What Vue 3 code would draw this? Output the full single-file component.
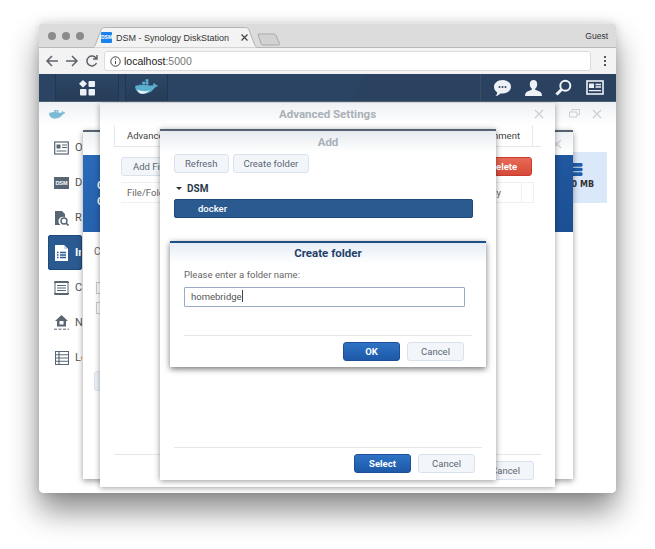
<script setup>
const menu = [
  { label: 'Overview', icon: 'card' },
  { label: 'Docker', icon: 'dsm' },
  { label: 'Registry', icon: 'reg' },
  { label: 'Image', icon: 'img', active: true },
  { label: 'Container', icon: 'cont' },
  { label: 'Network', icon: 'net' },
  { label: 'Log', icon: 'log' },
]
</script>

<template>
  <div class="page">
  <div class="browser">
    <div class="titlebar">
      <div class="lights"><i></i><i></i><i></i></div>
      <div class="tab">
        <svg class="tab-shape" width="172" height="21" viewBox="0 0 172 21"><path d="M0 21c4 0 5-2 6-5L11 3c.5-1.500 1.500-2.500 3.500-2.500h141c2 0 3 1 3.500 2.500l5 13c1 3 2 5 6 5z" fill="#f3f3f3" stroke="#b4b4b4"/></svg>
        <span class="favicon">DSM</span>
        <span class="tab-title">DSM - Synology DiskStation</span>
        <svg class="tab-x" width="9" height="9" viewBox="0 0 9 9"><path d="M1.500 1.500l6 6M7.500 1.500l-6 6" stroke="#444" stroke-width="1.200"/></svg>
      </div>
      <svg class="newtab" width="24" height="13" viewBox="0 0 24 13"><path d="M1 1h16c1 0 1.500.5 2 1.500l3.500 8c.4 1-.2 1.500-1 1.500H6c-1 0-1.500-.5-2-1.500L1 1z" fill="#d2d2d2" stroke="#a9a9a9"/></svg>
      <span class="guest">Guest</span>
    </div>

    <div class="toolbar">
      <svg class="nav" width="14" height="14" viewBox="0 0 14 14"><path d="M13 7H2M7 2L2 7l5 5" fill="none" stroke="#5f6368" stroke-width="1.500"/></svg>
      <svg class="nav" width="14" height="14" viewBox="0 0 14 14"><path d="M1 7h11M7 2l5 5-5 5" fill="none" stroke="#5f6368" stroke-width="1.500"/></svg>
      <svg class="nav" width="14" height="14" viewBox="0 0 14 14"><path d="M11.500 9A5 5 0 1 1 11.300 4.500M12 1v4H8" fill="none" stroke="#5f6368" stroke-width="1.500"/></svg>
      <div class="omnibox">
        <svg width="11" height="11" viewBox="0 0 11 11"><circle cx="5.500" cy="5.500" r="4.700" fill="none" stroke="#444"/><path d="M5.500 5v3M5.500 2.500v1.200" stroke="#444"/></svg>
        <span class="host">localhost<span class="port">:5000</span></span>
      </div>
      <div class="kebab"><i></i><i></i><i></i></div>
    </div>

    <div class="dsmbar">
      <div class="launcher main">
        <svg width="17" height="16" viewBox="0 0 17 16" fill="#eef2f6"><path d="M4 0l4 3.700L4 7.500 0 3.700z"/><rect x="9.500" y="1" width="6.500" height="6" rx="1"/><rect x="1" y="9" width="6.500" height="6.500" rx="1"/><rect x="9.500" y="9" width="6.500" height="6.500" rx="1"/></svg>
      </div>
      <div class="launcher dock">
        <svg width="24" height="18" viewBox="0 0 25 16"><path d="M.8 7.800h17.600c1.200 0 2-.4 2.600-1 .9 0 1.700-.4 2.300-1.200-.6-.5-1.500-.6-2.200-.4-.1-.9-.6-1.600-1.300-2-.6.700-.7 1.500-.3 2.300-.4.3-1 .4-1.600.4H.8c-.3 4 2 7.600 7.500 7.600 6 0 10-2.400 12-6.500" fill="#5cb0cf" stroke="#5cb0cf"/><path d="M2.500 9.500c3 2 9 2.500 13 .5-3 3-6 4.200-9 4-2.500-.5-3.500-2.500-4-4.500z" fill="#fff" opacity=".85"/><path d="M4 4.500h3v2.500H4zM7.500 4.500h3v2.500h-3zM11 4.500h3v2.500h-3zM7.500 1.500h3V4h-3zM11 1.500h3V4h-3zM11-1h3v2.200h-3z" fill="#5cb0cf"/></svg>
      </div>
      <div class="tray">
        <svg width="17" height="16" viewBox="0 0 17 16"><path d="M8.500 0C13 0 17 2.800 17 6.800s-4 6.800-8.500 6.800c-.8 0-1.500-.1-2.200-.2C5 14.800 3.500 15.600 1.500 16c1-1 1.600-2.300 1.700-3.600C1.200 11.200 0 9.200 0 6.800 0 2.800 4 0 8.500 0z" fill="#eef2f6"/><circle cx="5.500" cy="7" r="1" fill="#2a4260"/><circle cx="8.500" cy="7" r="1" fill="#2a4260"/><circle cx="11.500" cy="7" r="1" fill="#2a4260"/></svg>
        <svg width="17" height="16" viewBox="0 0 17 16" fill="#eef2f6"><path d="M8.500 0c2.500 0 3.700 1.800 3.700 4.200 0 2-1 3.600-2 4.400v1.200c2.500.8 5.800 2 6.300 3.400.2.600.5 2.800.5 2.800H0s.3-2.200.5-2.800c.5-1.400 3.800-2.600 6.300-3.400V8.600c-1-.8-2-2.400-2-4.400C4.800 1.800 6 0 8.500 0z"/></svg>
        <svg width="17" height="17" viewBox="0 0 17 17"><circle cx="10.300" cy="6.700" r="5" fill="none" stroke="#eef2f6" stroke-width="2"/><path d="M6.500 10.500L1.500 15.500" stroke="#eef2f6" stroke-width="3"/></svg>
        <svg width="18" height="15" viewBox="0 0 18 15"><rect x="1" y="1" width="16" height="13" fill="#2a4260" stroke="#eef2f6" stroke-width="1.600"/><rect x="3" y="3.500" width="5" height="4.500" fill="#eef2f6"/><path d="M9.500 4.500H15M9.500 7H15M3 10.700h12" stroke="#eef2f6" stroke-width="1.300"/></svg>
      </div>
    </div>

    <div class="desktop">
      <section class="win app">
        <header class="app-head">
          <svg width="17" height="11" viewBox="0 0 25 16"><path d="M.8 7.800h17.600c1.200 0 2-.4 2.600-1 .9 0 1.700-.4 2.300-1.200-.6-.5-1.500-.6-2.200-.4-.1-.9-.6-1.600-1.300-2-.6.700-.7 1.500-.3 2.300-.4.3-1 .4-1.600.4H.8c-.3 4 2 7.600 7.500 7.600 6 0 10-2.400 12-6.500" fill="#7cbad6" stroke="#7cbad6"/><path d="M4 4.500h3v2.500H4zM7.500 4.500h3v2.500h-3zM11 4.500h3v2.500h-3zM7.500 1.500h3V4h-3zM11 1.500h3V4h-3z" fill="#7cbad6"/></svg>
          <div class="app-ctl">
            <svg width="11" height="10" viewBox="0 0 11 10"><path d="M3 2.500V.5h7.500v5H8M.5 3h7.500v5H.5z" fill="none" stroke="#c9ced4"/></svg>
            <svg class="x" width="10" height="10" viewBox="0 0 10 10"><path d="M1 1l8 8M9 1L1 9" stroke="#c9ced4" stroke-width="1.100"/></svg>
          </div>
        </header>
        <div class="app-body">
          <nav class="side">
            <div v-for="m in menu" :key="m.label" class="side-row" :class="{ on: m.active }">
              <span class="side-ic">
                <svg v-if="m.icon === 'card'" width="15" height="14" viewBox="0 0 15 14"><rect x=".7" y="1" width="13.600" height="12" fill="#fff" stroke="#586674" stroke-width="1.200"/><rect x="2.500" y="3.500" width="4" height="4" fill="#586674"/><path d="M8 4h5M8 6.500h5M2.500 10h10" stroke="#586674"/></svg>
                <span v-else-if="m.icon === 'dsm'" class="dsm-ic">DSM</span>
                <svg v-else-if="m.icon === 'reg'" width="15" height="16" viewBox="0 0 15 16"><path d="M1 1h7l3 3v3.500A4.200 4.200 0 0 0 6.500 15H1z" fill="#586674"/><circle cx="10" cy="11" r="3" fill="#fff" stroke="#586674" stroke-width="1.400"/><path d="M12 13.200l2.500 2.300" stroke="#586674" stroke-width="1.600"/></svg>
                <svg v-else-if="m.icon === 'img'" width="15" height="16" viewBox="0 0 15 16"><path d="M1 0h9l4 4v12H1z" fill="#fff"/><path d="M10 0v4h4" fill="#cbd8e8"/><path d="M3 7.500h1.500M6 7.500h6M3 10h1.500M6 10h6M3 12.500h1.500M6 12.500h6" stroke="#2a5a8f" stroke-width="1.300"/></svg>
                <svg v-else-if="m.icon === 'cont'" width="15" height="14" viewBox="0 0 15 14"><rect x="1" y=".5" width="13" height="13" fill="#fff" stroke="#586674"/><path d="M0 1.500h15M0 12.500h15M3 4.500h9M3 7h9M3 9.500h9" stroke="#586674" stroke-width="1.200"/></svg>
                <svg v-else-if="m.icon === 'net'" width="15" height="15" viewBox="0 0 15 15"><path d="M7.500 0L14 6h-2v5.500H3V6H1z" fill="#586674"/><rect x="5.500" y="6" width="4" height="3.500" fill="#fff"/><path d="M0 14.200h15" stroke="#586674" stroke-dasharray="3 1.500"/></svg>
                <svg v-else width="14" height="14" viewBox="0 0 14 14"><rect x=".5" y=".5" width="13" height="13" fill="#fff" stroke="#586674"/><path d="M.5 3.700h13M.5 7h13M.5 10.300h13M4 .5v13" stroke="#586674" stroke-width="1.100"/></svg>
              </span>
              <span class="side-label">{{ m.label }}</span>
            </div>
          </nav>
          <div class="app-main">
            <div class="stat">
              <svg width="12" height="13" viewBox="0 0 12 14" fill="#1f5ea8"><rect y="0" width="12" height="4" rx="1.500"/><rect y="5" width="12" height="4" rx="1.500"/><rect y="10" width="12" height="4" rx="1.500"/></svg>
              <b>50 MB</b>
            </div>
          </div>
        </div>
      </section>

      <section class="win mid">
        <header class="mid-head">
          <svg width="10" height="10" viewBox="0 0 10 10"><path d="M1 1l8 8M9 1L1 9" stroke="#c9ced4" stroke-width="1.100"/></svg>
        </header>
        <div class="mid-band">
          <span class="sliver">Container</span>
          <span class="sliver">Create</span>
        </div>
        <div class="mid-body">
          <p class="mid-label">Command</p>
          <div class="mid-check"></div>
          <div class="mid-check"></div>
          <div class="mid-btn"></div>
        </div>
      </section>

      <section class="win adv">
        <header class="head"><span class="title">Advanced Settings</span>
          <svg class="adv-x" width="10" height="10" viewBox="0 0 10 10"><path d="M1 1l8 8M9 1L1 9" stroke="#c9ced4" stroke-width="1.100"/></svg>
        </header>
        <div class="tabs">
          <span class="tab-item">Advanced Settings</span>
          <span class="tab-spacer"></span>
          <span class="tab-item end">Environment</span>
        </div>
        <div class="adv-tools">
          <button class="btn">Add File</button>
          <span class="grow"></span>
          <button class="btn red">Delete</button>
        </div>
        <div class="adv-table">
          <span class="th">File/Folder</span>
          <span class="grow"></span>
          <span class="th ro">Read-Only</span>
          <span class="th narrow"></span>
        </div>
        <div class="grow"></div>
        <footer class="adv-foot">
          <button class="btn primary"></button>
          <button class="btn">Cancel</button>
        </footer>
      </section>

      <section class="win add">
        <header class="head add-head"><span class="title">Add</span></header>
        <div class="add-tools">
          <button class="btn">Refresh</button>
          <button class="btn">Create folder</button>
        </div>
        <div class="tree-root"><i class="caret"></i><b>DSM</b></div>
        <div class="tree-sel">docker</div>
        <div class="grow"></div>
        <footer class="add-foot">
          <button class="btn primary">Select</button>
          <button class="btn">Cancel</button>
        </footer>
      </section>

      <section class="win create">
        <header class="create-head">Create folder</header>
        <label class="create-label">Please enter a folder name:</label>
        <div class="field">homebridge<i class="cursor"></i></div>
        <div class="grow"></div>
        <footer class="create-foot">
          <button class="btn primary">OK</button>
          <button class="btn">Cancel</button>
        </footer>
      </section>
    </div>
  </div>
  </div>
</template>

<style scoped>
.page {
  width: 655px;
  height: 549px;
  box-sizing: border-box;
  padding: 23px 0 0 39px;
  overflow: hidden;
  background: #fff;
}
.browser {
  position: relative;
  width: 577px;
  height: 470px;
  display: flex;
  flex-direction: column;
  background: #fff;
  border-radius: 4px 4px 5px 5px;
  box-shadow: 0 18px 30px rgba(0, 0, 0, .45), 0 0 10px rgba(0, 0, 0, .14);
  font-family: Roboto, sans-serif;
  font-size: 9.500px;
}
.titlebar {
  position: relative;
  height: 25px;
  flex: none;
  background: #dcdcdc;
  display: flex;
  align-items: center;
  padding-left: 9px;
  box-sizing: border-box;
  border-top: 1px solid #e6e6e6;
  border-bottom: 1px solid #b8b8b8;
  border-radius: 4px 4px 0 0;
}
.lights { display: flex; gap: 6px; }
.lights i { width: 8px; height: 8px; border-radius: 50%; background: #8b8b8b; }
.tab {
  position: absolute;
  left: 51px;
  top: 3px;
  width: 172px;
  height: 21px;
  display: flex;
  align-items: center;
  font-family: "Liberation Sans", sans-serif;
}
.tab-shape { position: absolute; left: 0; top: 0; }
.favicon {
  position: relative;
  margin-left: 11px;
  width: 11px;
  height: 11px;
  background: #1a82e8;
  color: #fff;
  font: bold 5px/11px "Liberation Sans", sans-serif;
  text-align: center;
  border-radius: 1px;
}
.tab-title { position: relative; margin-left: 4px; font-size: 9px; color: #333; white-space: nowrap; }
.tab-x { position: absolute; left: 150px; top: 6px; }
.newtab { position: absolute; left: 218px; top: 9px; }
.guest { position: absolute; right: 8px; top: 7px; font: 8.500px "Liberation Sans", sans-serif; color: #333; }
.toolbar {
  height: 26px;
  flex: none;
  background: #f3f3f3;
  display: flex;
  align-items: center;
  padding-left: 6px;
  gap: 6px;
  box-sizing: border-box;
}
.nav { flex: none; }
.omnibox {
  margin-left: -1px;
  width: 487px;
  height: 20px;
  box-sizing: border-box;
  background: #fff;
  border: 1px solid #dcdcdc;
  border-radius: 3px;
  display: flex;
  align-items: center;
  padding-left: 5px;
  gap: 3px;
}
.host { font: 10.500px "Liberation Sans", sans-serif; color: #222; }
.port { color: #777; }
.kebab { margin-left: 7px; display: flex; flex-direction: column; gap: 2px; }
.kebab i { width: 2px; height: 2px; background: #555; }
.dsmbar {
  height: 28px;
  flex: none;
  box-sizing: border-box;
  background: linear-gradient(122deg, #2b4464 0 55%, #2a4260 55.100%);
  border-bottom: 1px solid #4f5f73;
  display: flex;
  align-items: stretch;
  padding-left: 16px;
}
.launcher {
  display: flex;
  align-items: center;
  justify-content: center;
  border-left: 1px solid #22364f;
  border-right: 1px solid #22364f;
  background: linear-gradient(#2d4767, #263c58);
}
.main { width: 62px; }
.dock { width: 41px; margin-left: 6px; }
.tray {
  margin-left: auto;
  width: 136px;
  padding-right: 12px;
  box-sizing: border-box;
  display: flex;
  align-items: center;
  justify-content: space-between;
  border-left: 1px solid #384e6b;
  padding-left: 13px;
}
.desktop { position: relative; flex: 1; overflow: hidden; background: #fff; border-radius: 0 0 5px 5px; }
.win { position: absolute; background: #fff; display: flex; flex-direction: column; box-sizing: border-box; }
.grow { flex: 1; }

.app { left: 0; top: 0; width: 100%; height: 100%; }
.app-head {
  height: 24px;
  flex: none;
  display: flex;
  align-items: center;
  padding-left: 10px;
  background: linear-gradient(#eef1f4, #fff);
}
.app-ctl { margin-left: auto; display: flex; align-items: center; gap: 12px; padding-right: 14px; }
.app-body { flex: 1; display: flex; }
.side { width: 190px; flex: none; padding: 4px 0 0 9px; box-sizing: border-box; }
.side-row { width: 34px; height: 35px; overflow: hidden; display: flex; align-items: center; padding-left: 6px; gap: 6px; box-sizing: border-box; border-radius: 2px; }
.side-row.on { background: #2a5a8f; border: 1px solid #1f4a7c; padding-left: 5px; }
.side-row.on .side-label { color: #fff; font-weight: bold; }
.side-ic { width: 15px; flex: none; display: flex; justify-content: center; align-items: center; }
.side-label { font-size: 11px; color: #555; white-space: nowrap; }
.dsm-ic { width: 15px; height: 12px; background: #586674; color: #fff; font: bold 5.500px/12px "Liberation Sans", sans-serif; text-align: center; }
.app-main { flex: 1; display: flex; justify-content: flex-end; padding: 26px 9px 0 0; align-items: flex-start; }
.stat {
  width: 50px;
  height: 51px;
  background: #dbe8f9;
  display: flex;
  flex-direction: column;
  align-items: flex-end;
  padding: 11px 13px 0 0;
  box-sizing: border-box;
  gap: 4px;
  color: #333;
  font: 8px "DejaVu Sans", sans-serif;
}
.stat svg { margin-right: 11px; }
.stat b { white-space: nowrap; }

.mid {
  left: 44px;
  top: 28px;
  width: 490px;
  height: 349px;
  border-top: 2px solid #55626f;
  box-shadow: 0 2px 6px rgba(0, 0, 0, .4);
}
.mid-head { height: 23px; flex: none; display: flex; align-items: center; justify-content: flex-end; padding-right: 11px; background: linear-gradient(#eef1f4, #fff); }
.mid-band {
  height: 77px;
  flex: none;
  background: linear-gradient(160deg, #2a6ab8, #1c4f94);
  color: #fff;
  display: flex;
  flex-direction: column;
  justify-content: center;
  gap: 3px;
  padding-left: 14px;
  font-size: 11px;
  font-weight: bold;
}
.sliver { width: 3px; overflow: hidden; white-space: nowrap; }
.mid-body { padding: 14px 0 0 11px; }
.mid-label { margin: 0 0 25px; width: 6px; overflow: hidden; font-size: 10px; color: #666; }
.mid-check { width: 12px; height: 12px; margin: 0 0 8px 2px; border: 1px solid #c5ccd4; background: #fff; box-sizing: border-box; }
.mid-btn { width: 60px; height: 20px; margin-top: 57px; background: #eef3f9; border: 1px solid #d9e2ec; box-sizing: border-box; border-radius: 3px; }

.adv {
  left: 61px;
  top: 1px;
  width: 455px;
  height: 384px;
  box-shadow: 0 1px 6px rgba(0, 0, 0, .38);
  padding: 0 14px 7px;
}
.head { position: relative; height: 22px; flex: none; margin: 0 -14px; display: flex; align-items: center; justify-content: center; background: linear-gradient(#eef1f4, #fff); }
.title { font-weight: bold; font-size: 11.500px; color: #a9b0b8; }
.adv-x { position: absolute; right: 11px; top: 6px; }
.tabs { height: 21px; flex: none; display: flex; border-bottom: 1px solid #e4e8ec; align-items: center; color: #444; }
.tab-item { height: 100%; display: flex; align-items: center; border-left: 1px solid #e4e8ec; padding: 0 12px; }
.tab-item.end { border-left: 0; border-right: 1px solid #e4e8ec; margin-right: 8px; }
.tab-spacer { flex: 1; }
.adv-tools { display: flex; margin: 10px 9px 0 7px; }
.adv-table { display: flex; height: 19px; margin: 6px 7px 0 7px; border-top: 1px solid #eef0f3; border-bottom: 1px solid #eef0f3; color: #666; align-items: center; }
.th { padding-left: 6px; }
.ro { padding-right: 20px; border-right: 1px solid #eef0f3; height: 100%; line-height: 19px; }
.narrow { width: 11px; height: 100%; border-right: 1px solid #eef0f3; padding: 0; }
.adv-foot { display: flex; justify-content: flex-end; gap: 7px; padding: 6px 7px 0 0; border-top: 1px solid #e4e8ec; }

.btn {
  height: 19px;
  box-sizing: border-box;
  padding: 0 11px;
  min-width: 57px;
  background: #f2f6fb;
  border: 1px solid #d9e2ec;
  border-radius: 3px;
  color: #5c6670;
  font: 9.500px Roboto, sans-serif;
}
.primary { background: linear-gradient(#2f72c4, #1d59a8); border-color: #1b4f97; color: #fff; font-weight: bold; }
.red { background: linear-gradient(#e86a56, #d64a3a); border-color: #c93c2c; color: #fff; font-weight: bold; }

.add {
  left: 121px;
  top: 27px;
  width: 336px;
  height: 351px;
  border-top: 2px solid #55626f;
  box-shadow: 0 1px 6px rgba(0, 0, 0, .42);
  padding: 0 14px 7px;
}
.add-head { height: 21px; background: linear-gradient(#e6eaef, #fff); }
.add-tools { display: flex; gap: 4px; margin-top: 2px; }
.add-tools .btn { min-width: 53px; padding: 0 10px; }
.tree-root { display: flex; align-items: center; margin: 9px 0 0 2px; gap: 5px; height: 12px; color: #2a3a4a; font-size: 10px; }
.caret { width: 0; height: 0; border: 3px solid transparent; border-top: 3px solid #333; border-bottom: 0; }
.tree-sel { width: 299px; height: 19px; margin-top: 5px; box-sizing: border-box; background: #2a5a8f; border: 1px solid #1f4a7c; border-radius: 2px; color: #fff; font-weight: 500; line-height: 17px; padding-left: 23px; }
.add-foot { display: flex; justify-content: flex-end; gap: 7px; padding: 6px 7px 0 0; border-top: 1px solid #e4e8ec; }

.create {
  left: 131px;
  top: 139px;
  width: 316px;
  height: 126px;
  border-top: 2px solid #1f4e84;
  box-shadow: 0 2px 6px rgba(0, 0, 0, .55);
  padding: 0 14px 6px;
  background: #fff;
}
.create-head { margin: 0 -14px; height: 21px; flex: none; background: linear-gradient(#e6edf5, #fff); text-align: center; line-height: 21px; font-weight: bold; font-size: 11.500px; color: #1f3f6a; }
.create-label { margin-top: 5px; color: #666; letter-spacing: .02px; }
.field { width: 281px; height: 20px; margin-top: 7px; box-sizing: border-box; border: 1px solid #9aaac6; border-radius: 1px; line-height: 18px; color: #555; padding-left: 6px; }
.cursor { display: inline-block; width: 1px; height: 12px; background: #444; vertical-align: -2px; }
.create-foot { display: flex; justify-content: flex-end; gap: 7px; padding: 6px 8px 0 0; border-top: 1px solid #e4e8ec; }
</style>
